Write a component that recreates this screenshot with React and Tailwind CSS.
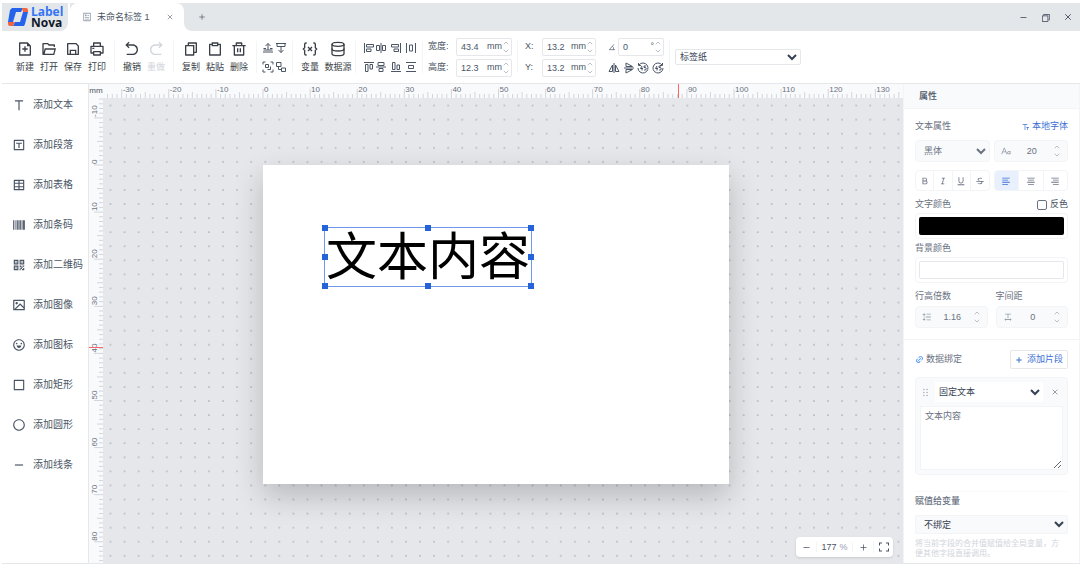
import { useEffect, useRef, useState } from "react";
import { ChevronDown, ChevronUp, Database, Minus, Plus, X } from "lucide-react";
import {
  RiAlignCenter,
  RiAlignLeft,
  RiAlignRight,
  RiArrowGoBackLine,
  RiArrowGoForwardLine,
  RiArticleLine,
  RiBarcodeLine,
  RiBold,
  RiCheckboxBlankLine,
  RiCircleLine,
  RiClipboardLine,
  RiDeleteBinLine,
  RiDraggable,
  RiEmotionLine,
  RiFileAddLine,
  RiFileCopyLine,
  RiFolderOpenLine,
  RiFontSize,
  RiFontSize2,
  RiFullscreenLine,
  RiImageLine,
  RiItalic,
  RiLineHeight,
  RiLinkM,
  RiPrinterLine,
  RiQrCodeLine,
  RiSaveLine,
  RiStrikethrough,
  RiSubtractLine,
  RiTBoxLine,
  RiTable2,
  RiText,
  RiTextSpacing,
  RiUnderline,
} from "react-icons/ri";
import { VscChromeRestore } from "react-icons/vsc";

// pixels per millimetre on the rulers
const MM = 4.71;

const tools = [
  { label: "添加文本", icon: RiText },
  { label: "添加段落", icon: RiTBoxLine },
  { label: "添加表格", icon: RiTable2 },
  { label: "添加条码", icon: RiBarcodeLine },
  { label: "添加二维码", icon: RiQrCodeLine },
  { label: "添加图像", icon: RiImageLine },
  { label: "添加图标", icon: RiEmotionLine },
  { label: "添加矩形", icon: RiCheckboxBlankLine },
  { label: "添加圆形", icon: RiCircleLine },
  { label: "添加线条", icon: RiSubtractLine },
];

const fileActions = [
  { label: "新建", icon: RiFileAddLine },
  { label: "打开", icon: RiFolderOpenLine },
  { label: "保存", icon: RiSaveLine },
  { label: "打印", icon: RiPrinterLine },
];

const editActions = [
  { label: "复制", icon: RiFileCopyLine },
  { label: "粘贴", icon: RiClipboardLine },
  { label: "删除", icon: RiDeleteBinLine },
];

function LineIcon({ children }) {
  return (
    <svg viewBox="0 0 24 24" fill="none" stroke="currentColor" strokeWidth="2" className="w-3 h-3">
      {children}
    </svg>
  );
}

const layerIcons = [
  {
    label: "上移一层",
    shape: <path d="M12 16V3M7 8l5-5 5 5M3 13h5M16 13h5M2 20h20M3 16h18" />,
  },
  {
    label: "下移一层",
    shape: <path d="M12 8v13M7 16l5 5 5-5M2 3h20M4 9h16M4 3v6M20 3v6" />,
  },
  {
    label: "组合",
    shape: <path d="M2 7V2h5M17 2h5v5M22 17v5h-5M7 22H2v-5M7 7h6v6H7zM11 17h6v-6" />,
  },
  {
    label: "取消组合",
    shape: <path d="M3 3h9v8H3zM13 14h8v7h-8zM7 11v6h6" />,
  },
];

const alignIcons = [
  { label: "左对齐", shape: <path d="M3 2v20M7 5h14v5H7zM7 14h9v5H7z" /> },
  { label: "水平居中", shape: <path d="M12 2v20M3 7h6v10H3zM15 7h6v10h-6z" /> },
  { label: "右对齐", shape: <path d="M21 2v20M3 5h14v5H3zM8 14h9v5H8z" /> },
  { label: "水平分布", shape: <path d="M3 2v20M21 2v20M9 6h6v12H9z" /> },
  { label: "顶对齐", shape: <path d="M2 3h20M5 7h5v14H5zM14 7h5v9h-5z" /> },
  { label: "垂直居中", shape: <path d="M2 12h20M6 3h12v6H6zM8 15h8v6H8z" /> },
  { label: "底对齐", shape: <path d="M2 21h20M5 3h5v14H5zM14 8h5v9h-5z" /> },
  { label: "垂直分布", shape: <path d="M2 3h20M2 21h20M7 9h10v6H7z" /> },
];

const rotateIcons = [
  { label: "水平翻转", shape: <path d="M12 2v20M9 6v13H2zM15 6v13h7z" /> },
  { label: "垂直翻转", shape: <path d="M2 12h20M6 9V2l13 7zM6 15v7l13-7z" /> },
  {
    label: "逆时针旋转",
    shape: <path d="M4 6a10 10 0 1 1-2 6M3 2v5h5M10 8l-3 5h5M10 11v6M18 8h-4v3h2a2 2 0 0 1 0 5h-2" />,
  },
  {
    label: "顺时针旋转",
    shape: <path d="M20 6a10 10 0 1 0 2 6M21 2v5h-5M10 8l-3 5h5M10 11v6M18 8h-4v3h2a2 2 0 0 1 0 5h-2" />,
  },
];

function IconButton({ item }) {
  return (
    <button aria-label={item.label} title={item.label} className="flex items-center justify-center">
      <LineIcon>{item.shape}</LineIcon>
    </button>
  );
}

function ToolButton({ label, icon: Icon, disabled }) {
  return (
    <button
      disabled={disabled}
      className="w-6 flex flex-col items-center gap-1 whitespace-nowrap text-[#3a3f47] disabled:text-gray-300"
    >
      <Icon className="w-4 h-4" />
      <span className="leading-3">{label}</span>
    </button>
  );
}

function Divider() {
  return <div className="w-px h-8 mx-[5px] shrink-0 bg-gray-100" />;
}

function Spinner({ className }) {
  return (
    <span className={className}>
      <button aria-label="增加" className="block">
        <ChevronUp className="w-2 h-2" />
      </button>
      <button aria-label="减少" className="block">
        <ChevronDown className="w-2 h-2" />
      </button>
    </span>
  );
}

function SizeField({ label, value, unit, width }) {
  return (
    <div className={`${width} h-[18px] flex items-center border border-gray-200 rounded-xs pl-1 pr-px`}>
      <input
        aria-label={label}
        defaultValue={value}
        className="min-w-0 flex-1 text-gray-600 outline-none"
      />
      <span className="text-gray-600">{unit}</span>
      <Spinner className="text-gray-400" />
    </div>
  );
}

function Logo() {
  return (
    <div className="w-[66px] h-full bg-[#e4e7ea] rounded-br-lg flex items-center gap-0.5 pl-[5px]">
      <svg viewBox="0 0 22 22" className="w-[22px] h-[22px] shrink-0">
        <path d="M5 2h11l-2 4H9L6 16H1L3 4z" fill="#2563eb" />
        <path d="M17 20H6l2-4h5l3-10h5l-3 12z" fill="#2563eb" />
        <path d="M15 2h4q2 0 2 2v2h-5z" fill="#f2643d" />
        <path d="M1 16h5l2 0-2 4H3q-2 0-2-2z" fill="#f2643d" />
      </svg>
      <div className="font-['Open_Sans','Noto_Sans',sans-serif] font-bold text-xs leading-[11px] pb-px">
        <div className="text-[#3474f5]">Label</div>
        <div className="text-gray-900">Nova</div>
      </div>
    </div>
  );
}

function TitleBar() {
  return (
    <header className="h-7 flex shrink-0 bg-white">
      <Logo />
      <div className="bg-[#e4e7ea] ml-[2px]">
        <div className="w-[114px] h-full bg-white rounded-t-lg flex items-center pl-3 pr-[10px] text-gray-600">
          <RiArticleLine className="w-[10px] h-[10px] text-gray-400" />
          <span className="ml-[5px] flex-1 whitespace-nowrap">未命名标签 1</span>
          <button aria-label="关闭标签">
            <X className="w-2 h-2 text-gray-500" />
          </button>
        </div>
      </div>
      <div className="flex-1 bg-[#e4e7ea] rounded-bl-lg flex items-center justify-between pl-[14px] pr-[7px] text-gray-600">
        <button aria-label="新建标签">
          <Plus className="w-2 h-2" />
        </button>
        <div className="flex items-center gap-3 text-gray-700">
          <button aria-label="最小化">
            <Minus className="w-[9px] h-[9px]" />
          </button>
          <button aria-label="还原">
            <VscChromeRestore className="w-[11px] h-[11px]" />
          </button>
          <button aria-label="关闭">
            <X className="w-[10px] h-[10px]" />
          </button>
        </div>
      </div>
    </header>
  );
}

function VariableIcon({ className }) {
  return (
    <svg viewBox="0 0 24 24" fill="none" stroke="currentColor" strokeWidth="2" className={className}>
      <path d="M7 3H6a2 2 0 0 0-2 2v5l-2 2 2 2v5a2 2 0 0 0 2 2h1" />
      <path d="M17 3h1a2 2 0 0 1 2 2v5l2 2-2 2v5a2 2 0 0 1-2 2h-1" />
      <path d="M9 9l6 6M15 9l-6 6" />
    </svg>
  );
}

function Toolbar() {
  return (
    <div className="h-[53px] shrink-0 flex items-center pl-[11px] border-b border-gray-200 bg-white text-gray-600">
      <div className="flex">
        {fileActions.map((a) => (
          <ToolButton key={a.label} {...a} />
        ))}
      </div>
      <Divider />
      <div className="flex">
        <ToolButton label="撤销" icon={RiArrowGoBackLine} />
        <ToolButton label="重做" icon={RiArrowGoForwardLine} disabled />
      </div>
      <Divider />
      <div className="flex">
        {editActions.map((a) => (
          <ToolButton key={a.label} {...a} />
        ))}
      </div>
      <Divider />
      <div className="grid grid-cols-[12px_12px] gap-x-px gap-y-[7px]">
        {layerIcons.map((i) => (
          <IconButton key={i.label} item={i} />
        ))}
      </div>
      <Divider />
      <div className="flex gap-1">
        <ToolButton label="变量" icon={VariableIcon} />
        <ToolButton label="数据源" icon={Database} />
      </div>
      <Divider />
      <div className="grid grid-cols-[12px_12px_18px_12px] gap-y-[7px] pl-0.5">
        {alignIcons.map((i) => (
          <IconButton key={i.label} item={i} />
        ))}
      </div>
      <Divider />
      <div className="grid grid-cols-[28px_56px] gap-y-[3px] items-center">
        <span>宽度:</span>
        <SizeField label="宽度" value="43.4" unit="mm" width="w-full" />
        <span>高度:</span>
        <SizeField label="高度" value="12.3" unit="mm" width="w-full" />
      </div>
      <Divider />
      <div className="grid grid-cols-[17px_54px] gap-y-[3px] items-center pl-0.5">
        <span>X:</span>
        <SizeField label="X" value="13.2" unit="mm" width="w-full" />
        <span>Y:</span>
        <SizeField label="Y" value="13.2" unit="mm" width="w-full" />
      </div>
      <div className="flex flex-col gap-[3px] ml-3">
        <div className="flex items-center gap-0.5">
          <svg viewBox="0 0 24 24" fill="none" stroke="currentColor" strokeWidth="2" className="w-2 h-2">
            <path d="M18 4L4 20h17M13 10a8 8 0 0 1 3 10" />
          </svg>
          <SizeField label="角度" value="0" unit="°" width="w-[46px]" />
        </div>
        <div className="flex justify-between items-center h-[18px]">
          {rotateIcons.map((i) => (
            <IconButton key={i.label} item={i} />
          ))}
        </div>
      </div>
      <Divider />
      <select
        aria-label="纸张类型"
        className="w-[126px] h-4 border border-gray-200 rounded-xs bg-white text-gray-700"
      >
        <option>标签纸</option>
      </select>
    </div>
  );
}

function Sidebar() {
  return (
    <nav className="w-[86px] shrink-0 pt-px bg-white">
      {tools.map(({ label, icon: Icon }) => (
        <button
          key={label}
          className="h-10 w-full flex items-center gap-[7px] pl-[10px] text-[10px] whitespace-nowrap text-gray-600"
        >
          <Icon className="w-[14px] h-[14px] shrink-0" />
          {label}
        </button>
      ))}
    </nav>
  );
}

function useSize() {
  const ref = useRef(null);
  const [size, setSize] = useState({ width: 0, height: 0 });

  useEffect(() => {
    const observer = new ResizeObserver(([entry]) => {
      setSize({ width: entry.contentRect.width, height: entry.contentRect.height });
    });
    observer.observe(ref.current);
    return () => observer.disconnect();
  }, []);

  return [ref, size];
}

// every millimetre that is visible on a ruler of the given length
function visibleTicks(origin, length) {
  const first = Math.ceil(-origin / MM);
  const last = Math.floor((length - origin) / MM);
  return Array.from({ length: Math.max(0, last - first + 1) }, (_, i) => first + i);
}

function tickLength(mm) {
  if (mm % 10 === 0) return 9;
  return mm % 5 === 0 ? 6 : 4;
}

function HorizontalRuler({ origin }) {
  const [ref, { width }] = useSize();

  return (
    <div ref={ref} className="flex-1 min-w-0">
      <svg className="block w-full h-[14px] bg-gray-50 text-[8px]">
        {visibleTicks(origin, width).map((mm) => {
          const x = origin + mm * MM;
          return (
            <g key={mm}>
              <line x1={x} x2={x} y1={14 - tickLength(mm)} y2="14" className="stroke-gray-300" />
              {mm % 10 === 0 && (
                <text x={x + 1} y="8" className="fill-gray-500">
                  {mm}
                </text>
              )}
            </g>
          );
        })}
        {/* cursor position */}
        <rect x="575" y="0" width="1" height="14" className="fill-red-400" />
      </svg>
    </div>
  );
}

function VerticalRuler({ origin }) {
  const [ref, { height }] = useSize();

  return (
    <div ref={ref} className="w-[14px] shrink-0">
      <svg className="block w-full h-full bg-gray-50 text-[8px]">
        {visibleTicks(origin, height).map((mm) => {
          const y = origin + mm * MM;
          return (
            <g key={mm}>
              <line x1={14 - tickLength(mm)} x2="14" y1={y} y2={y} className="stroke-gray-300" />
              {mm % 10 === 0 && (
                <text transform={`translate(8 ${y - 1}) rotate(-90)`} className="fill-gray-500">
                  {mm}
                </text>
              )}
            </g>
          );
        })}
        <rect x="0" y="249" width="14" height="1" className="fill-red-400" />
      </svg>
    </div>
  );
}

const handles = [
  "-left-[3px] -top-[3px]",
  "left-1/2 -ml-[3px] -top-[3px]",
  "-right-[3px] -top-[3px]",
  "-left-[3px] top-1/2 -mt-[3px]",
  "-right-[3px] top-1/2 -mt-[3px]",
  "-left-[3px] -bottom-[3px]",
  "left-1/2 -ml-[3px] -bottom-[3px]",
  "-right-[3px] -bottom-[3px]",
];

function Canvas() {
  const [zoom, setZoom] = useState(177);

  return (
    <main className="flex-1 min-w-0 flex flex-col border-l border-gray-200">
      <div className="flex shrink-0">
        <div className="w-[14px] h-[14px] bg-gray-50 text-[8px] leading-[14px] text-center text-gray-600">
          mm
        </div>
        <HorizontalRuler origin={160} />
      </div>
      <div className="flex-1 min-h-0 flex">
        <VerticalRuler origin={67} />
        <div className="flex-1 relative overflow-hidden bg-[#e5e7eb]">
          <svg className="w-full h-full block">
            <defs>
              <pattern id="dots" width="14.07" height="14.07" patternUnits="userSpaceOnUse">
                <circle cx="7.5" cy="7.5" r="0.8" fill="#9da3ac" />
              </pattern>
            </defs>
            <rect width="100%" height="100%" fill="url(#dots)" />
          </svg>

          {/* Label paper */}
          <div className="absolute left-[160px] top-[67px] w-[466px] h-[319px] bg-white shadow-[0_12px_28px_rgba(0,0,0,0.2)]">
            <div className="absolute left-[61px] top-[62px] w-[208px] h-[60px] border border-[#6f97ea] flex items-center justify-center text-[51px] leading-none text-black whitespace-nowrap">
              文本内容
              {handles.map((pos) => (
                <span key={pos} className={`absolute w-[6px] h-[6px] bg-[#2563d9] ${pos}`} />
              ))}
            </div>
          </div>

          <div className="absolute right-[10px] bottom-[6px] h-5 flex items-center bg-white rounded-sm shadow-sm text-gray-600">
            <button
              aria-label="缩小"
              onClick={() => setZoom(zoom - 1)}
              className="w-5 flex justify-center"
            >
              <Minus className="w-[9px] h-[9px]" />
            </button>
            <label className="w-[37px] flex items-center justify-center border-x border-gray-100">
              <input
                aria-label="缩放比例"
                value={zoom}
                onChange={(e) => setZoom(Number(e.target.value) || 0)}
                className="w-[18px] font-medium outline-none"
              />
              <span className="text-gray-400">%</span>
            </label>
            <button
              aria-label="放大"
              onClick={() => setZoom(zoom + 1)}
              className="w-5 flex justify-center"
            >
              <Plus className="w-[9px] h-[9px]" />
            </button>
            <button aria-label="适应窗口" className="w-5 flex justify-center border-l border-gray-100">
              <RiFullscreenLine className="w-3 h-3" />
            </button>
          </div>
        </div>
      </div>
    </main>
  );
}

function NumberField({ label, value, icon: Icon }) {
  return (
    <div className="h-[22px] flex items-center bg-gray-50 border border-gray-100 rounded-sm px-[6px]">
      <Icon className="w-[10px] h-[10px] shrink-0 text-gray-400" />
      <input
        aria-label={label}
        defaultValue={value}
        className="min-w-0 flex-1 text-center text-gray-500 outline-none"
      />
      <Spinner className="text-gray-400" />
    </div>
  );
}

function ButtonGroup({ items, active }) {
  return (
    <div className="h-[21px] flex border border-gray-100 rounded-sm divide-x divide-gray-100 overflow-hidden">
      {items.map(({ label, icon: Icon }) => (
        <button
          key={label}
          aria-label={label}
          className={
            label === active
              ? "flex-1 flex items-center justify-center bg-[#e8f0fe] text-[#3b6fd6]"
              : "flex-1 flex items-center justify-center text-gray-500"
          }
        >
          <Icon className="w-[10px] h-[10px]" />
        </button>
      ))}
    </div>
  );
}

function PropertyPanel() {
  return (
    <aside className="w-[177px] shrink-0 bg-white border-x border-gray-100 text-gray-500 overflow-hidden">
      <h2 className="h-[25px] flex items-center px-[15px] bg-gray-50 border-b border-gray-100 font-medium text-gray-600">
        属性
      </h2>

      <section className="px-[11px] pt-3 pb-[11px] border-b border-gray-100">
        <div className="flex items-center justify-between h-[11px]">
          <h3>文本属性</h3>
          <button className="flex items-center gap-0.5 text-[#3b6fd6]">
            <RiFontSize2 className="w-2 h-2" />
            本地字体
          </button>
        </div>
        <div className="grid grid-cols-2 gap-1 mt-2">
          <select
            aria-label="字体"
            className="h-[22px] min-w-0 pl-1 bg-gray-50 border border-gray-100 rounded-sm"
          >
            <option>黑体</option>
          </select>
          <NumberField label="字号" value="20" icon={RiFontSize} />
        </div>
        <div className="grid grid-cols-2 gap-1 mt-2">
          <ButtonGroup
            items={[
              { label: "加粗", icon: RiBold },
              { label: "斜体", icon: RiItalic },
              { label: "下划线", icon: RiUnderline },
              { label: "删除线", icon: RiStrikethrough },
            ]}
          />
          <ButtonGroup
            active="居左"
            items={[
              { label: "居左", icon: RiAlignLeft },
              { label: "居中", icon: RiAlignCenter },
              { label: "居右", icon: RiAlignRight },
            ]}
          />
        </div>

        <div className="flex items-center justify-between h-[11px] mt-2">
          <span>文字颜色</span>
          <label className="flex items-center gap-[3px] text-gray-600">
            <input
              type="checkbox"
              className="appearance-none w-[10px] h-[10px] border border-gray-500 rounded-xs checked:bg-blue-600"
            />
            反色
          </label>
        </div>
        <button
          aria-label="文字颜色"
          className="block w-full h-[26px] mt-[3px] p-[3px] border border-gray-100 rounded-sm"
        >
          <span className="block h-full bg-black rounded-xs" />
        </button>
        <div className="h-[11px] flex items-center mt-1">背景颜色</div>
        <button
          aria-label="背景颜色"
          className="block w-full h-[26px] mt-[3px] p-[3px] border border-gray-100 rounded-sm"
        >
          <span className="block h-full bg-white border border-gray-200 rounded-xs" />
        </button>

        <div className="grid grid-cols-2 gap-2 mt-2">
          <div>
            <div className="h-[11px] flex items-center mb-1">行高倍数</div>
            <NumberField label="行高倍数" value="1.16" icon={RiLineHeight} />
          </div>
          <div>
            <div className="h-[11px] flex items-center mb-1">字间距</div>
            <NumberField label="字间距" value="0" icon={RiTextSpacing} />
          </div>
        </div>
      </section>

      <section className="px-[11px] pt-[10px]">
        <div className="flex items-center justify-between">
          <h3 className="flex items-center gap-0.5">
            <RiLinkM className="w-[9px] h-[9px] text-blue-500" />
            数据绑定
          </h3>
          <button className="h-[19px] flex items-center gap-1 px-1 border border-gray-200 rounded-xs text-[#3b6fd6]">
            <Plus className="w-2 h-2" strokeWidth={3} />
            添加片段
          </button>
        </div>

        {/* Text segment */}
        <div className="mt-2 p-1 bg-gray-50 border border-gray-100 rounded-sm">
          <div className="h-5 flex items-center justify-between">
            <RiDraggable className="w-[11px] h-[11px] text-gray-400" />
            <select aria-label="片段类型" className="w-[108px] h-full bg-white text-gray-700">
              <option>固定文本</option>
            </select>
            <button aria-label="删除片段" className="px-1">
              <X className="w-2 h-2" />
            </button>
          </div>
          <textarea
            aria-label="片段内容"
            defaultValue="文本内容"
            className="block w-full h-[64px] mt-1 px-1 py-[5px] bg-white border border-gray-100 outline-none"
          />
        </div>

        <div className="mt-4 pt-1 border-t border-gray-50">
          <label htmlFor="variable" className="h-[11px] flex items-center font-medium">
            赋值给变量
          </label>
          <select
            id="variable"
            className="w-full h-[19px] mt-2 pl-1 bg-gray-50 border border-gray-100 rounded-xs text-gray-700"
          >
            <option>不绑定</option>
          </select>
          <p className="mt-[5px] pr-2 text-[8px] leading-[10px] text-gray-300">
            将当前字段的合并值赋值给全局变量，方便其他字段直接调用。
          </p>
        </div>
      </section>
    </aside>
  );
}

export default function App() {
  return (
    <div className="h-screen flex flex-col pt-[3px] pb-[5px] pl-0.5 bg-white overflow-hidden text-[9px] leading-none font-['Liberation_Sans','Noto_Sans_CJK_SC',sans-serif]">
      <TitleBar />
      <Toolbar />
      <div className="flex-1 min-h-0 flex border-b border-gray-200">
        <Sidebar />
        <Canvas />
        <PropertyPanel />
      </div>
    </div>
  );
}
